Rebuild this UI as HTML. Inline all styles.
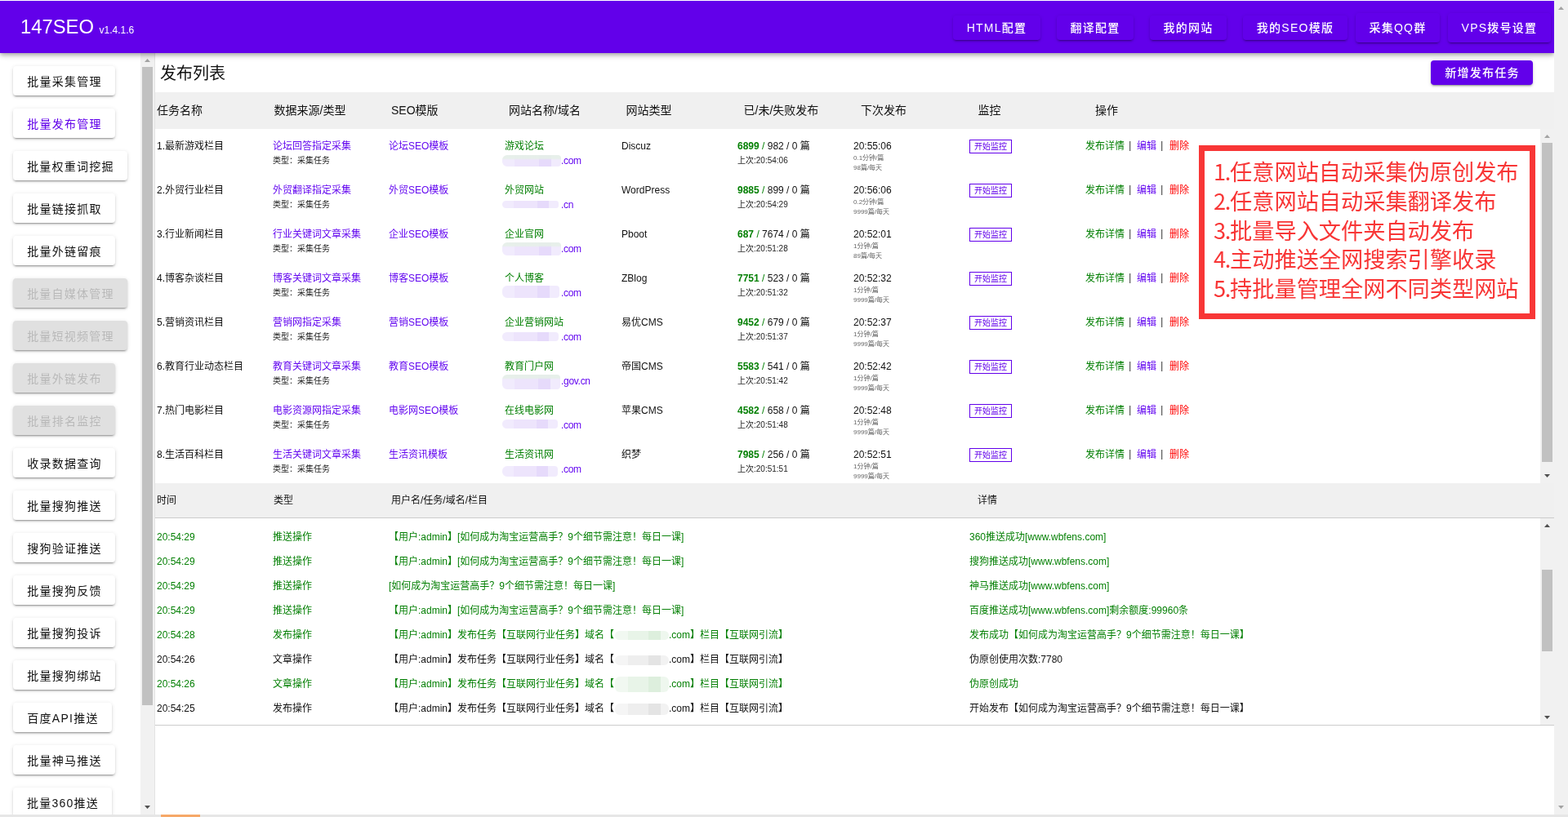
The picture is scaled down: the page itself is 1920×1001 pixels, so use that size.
<!DOCTYPE html>
<html lang="zh-CN">
<head>
<meta charset="utf-8">
<title>147SEO - 发布列表</title>
<style>
*{box-sizing:border-box;margin:0;padding:0}
html,body{width:1920px;height:1001px;overflow:hidden;background:#fff}
body{position:relative;will-change:transform;font-family:"Liberation Sans","Noto Sans CJK SC",sans-serif;color:#111;font-size:12px;line-height:16px}
/* app bar */
#bar{position:absolute;left:0;top:1px;width:1903px;height:64px;background:#6200ea;z-index:5;
 box-shadow:0 2px 4px -1px rgba(0,0,0,.2),0 4px 5px 0 rgba(0,0,0,.14),0 1px 10px 0 rgba(0,0,0,.12)}
#bar .logo{position:absolute;left:25px;top:15px;color:#fff;font-size:23.8px;line-height:34px;white-space:nowrap}
#bar .logo small{font-size:12px;margin-left:0}
.nb{position:absolute;color:#fff;font-size:14px;font-weight:500;letter-spacing:1.25px;line-height:31px;height:30px;top:18px;text-align:center;border-radius:4px;white-space:nowrap;
 box-shadow:0 3px 1px -2px rgba(0,0,0,.2),0 2px 2px 0 rgba(0,0,0,.14),0 1px 5px 0 rgba(0,0,0,.12)}
.nb.big{height:36px;top:15px;line-height:37px}
/* sidebar */
#side{position:absolute;left:0;top:65px;width:172px;height:933px;overflow:hidden;background:#fff}
.sb{position:absolute;left:16px;height:36px;line-height:38.5px;width:125px;border-radius:4px;background:#fff;color:#111;font-size:14px;letter-spacing:1.25px;text-align:center;white-space:nowrap;text-indent:1px;
 box-shadow:0 3px 1px -2px rgba(0,0,0,.2),0 2px 2px 0 rgba(0,0,0,.14),0 1px 5px 0 rgba(0,0,0,.12)}
.sb.w7{width:140px}
.sb.w5{width:121px}
.sb.act{color:#6200ea}
.sb.dis{background:#e0e0e0;color:#b9b9b9}
/* scrollbars */
.sc{position:absolute;width:17px;background:#f1f1f1}
.sc i{position:absolute;left:2px;width:13px;background:#c1c1c1}
.sc b{position:absolute;left:5px;width:7px;height:4px;background:#505050}
.sc b.u{clip-path:polygon(50% 0,100% 100%,0 100%)}
.sc b.d{clip-path:polygon(0 0,100% 0,50% 100%)}
.sc b.g{background:#a3a3a3}
/* main */
#title{position:absolute;left:196px;top:76px;font-size:20px;line-height:28px;color:#111}
#add{position:absolute;left:1752px;top:74px;width:125px;height:30px;line-height:31px;font-weight:500;border-radius:4px;background:#6200ea;color:#fff;font-size:14px;letter-spacing:1.25px;text-align:center;text-indent:1px;
 box-shadow:0 3px 1px -2px rgba(0,0,0,.2),0 2px 2px 0 rgba(0,0,0,.14),0 1px 5px 0 rgba(0,0,0,.12)}
.hd{position:absolute;left:190px;width:1713px;background:#f0f0f0}
.hd span{position:absolute;white-space:nowrap;color:#111}
#h1{top:113px;height:45px}
#h1 span{font-size:14px;line-height:20px;top:12px}
#h2{top:592px;height:43px;border-bottom:1px solid #ccc}
#h2 span{font-size:12px;line-height:16px;top:13px}
.row{position:absolute;left:190px;width:1696px;height:54px}
.row span,.row a{position:absolute;white-space:nowrap;font-size:12px;line-height:16px;top:13px}
.row .s{font-size:10px;line-height:14px;top:32px;color:#222}
.row .x{font-size:8px;line-height:12px;color:#666}
.row .bar{font-size:13px;top:12px;color:#444}
.g{color:#058005}
.p{color:#6408f0}
.r{color:#f00}
.row .mon{left:997px;top:13px;width:52px;height:17px;border:1px solid #6200ea;color:#6200ea;font-size:10px;line-height:15px;text-align:center}
.row .blur{left:425px;width:72px;border-radius:6px 4px 4px 6px;background:linear-gradient(90deg,#f1ebfd 0 21%,#ede4fc 21% 62%,#e6dafb 62% 83%,#f1ebfd 83%);filter:blur(.6px)}
.row .blur.gr{background:linear-gradient(180deg,rgba(230,240,232,.9) 0 4px,rgba(230,240,232,0) 6px),linear-gradient(90deg,#f1ebfd 0 21%,#ede4fc 21% 62%,#e6dafb 62% 83%,#f1ebfd 83%)}
.lg{position:absolute;left:190px;width:1696px;height:30px}
.lg span{position:absolute;white-space:nowrap;font-size:12px;line-height:16px;top:7px}
.lg .bl{width:66px;left:563px;border-radius:6px;filter:blur(.7px)}
.lg.g .bl{background:linear-gradient(90deg,#f1f8f1 0 25%,#e8f4e8 25% 62%,#ddefdd 62% 85%,#eef7ee 85%)}
.lg.k .bl{background:linear-gradient(90deg,#f5f5f5 0 25%,#eeeeee 25% 62%,#e4e4e4 62% 85%,#f2f2f2 85%)}
.lg.k span{color:#111}
.lg.g span{color:#058005}
#note{position:absolute;left:1468px;top:178px;width:412px;height:213px;border:7px solid #f83636;background:#fff;color:#f83636;font-family:"Noto Sans CJK SC","Liberation Sans",sans-serif;font-size:27.2px;line-height:35.75px;padding:7px 0 0 11px;white-space:nowrap;z-index:3}
#note i{font-style:normal;letter-spacing:-1.3px}
#top{position:absolute;left:0;top:0;width:1903px;height:1px;background:#fff;z-index:7}
#foot{position:absolute;left:0;top:998px;width:1920px;height:3px;background:#e6e6e6}
#foot i{position:absolute;left:197px;top:0;width:48px;height:3px;background:#f6a868}
#vl{position:absolute;left:189px;top:65px;width:1px;height:933px;background:#e3e3e3}
#l1{position:absolute;left:190px;top:888px;width:1713px;height:1px;background:#ccc}
</style>
</head>
<body>

<div id="top"></div>
<div id="bar">
<div class="logo">147SEO <small>v1.4.1.6</small></div>
<div class="nb" style="left:1167px;width:107px">HTML配置</div>
<div class="nb" style="left:1294px;width:94px">翻译配置</div>
<div class="nb" style="left:1408px;width:94px">我的网站</div>
<div class="nb" style="left:1522px;width:128px">我的SEO模版</div>
<div class="nb big" style="left:1660px;width:103px">采集QQ群</div>
<div class="nb big" style="left:1773px;width:126px">VPS拨号设置</div>
</div>
<div id="side">
<div class="sb" style="top:16px">批量采集管理</div>
<div class="sb act" style="top:68px">批量发布管理</div>
<div class="sb w7" style="top:120px">批量权重词挖掘</div>
<div class="sb" style="top:172px">批量链接抓取</div>
<div class="sb" style="top:224px">批量外链留痕</div>
<div class="sb w7 dis" style="top:276px">批量自媒体管理</div>
<div class="sb w7 dis" style="top:328px">批量短视频管理</div>
<div class="sb dis" style="top:380px">批量外链发布</div>
<div class="sb dis" style="top:432px">批量排名监控</div>
<div class="sb" style="top:484px">收录数据查询</div>
<div class="sb" style="top:536px">批量搜狗推送</div>
<div class="sb" style="top:588px">搜狗验证推送</div>
<div class="sb" style="top:640px">批量搜狗反馈</div>
<div class="sb" style="top:692px">批量搜狗投诉</div>
<div class="sb" style="top:744px">批量搜狗绑站</div>
<div class="sb w5" style="top:796px">百度API推送</div>
<div class="sb" style="top:848px">批量神马推送</div>
<div class="sb w5" style="top:900px">批量360推送</div>
</div>
<div class="sc" style="left:172px;top:65px;height:933px;border-right:0"><b class="u g" style="top:7px"></b><i style="top:17px;height:782px"></i><b class="d" style="top:922px"></b></div>
<div id="title">发布列表</div>
<div id="add">新增发布任务</div>
<div class="hd" id="h1">
<span style="left:2px">任务名称</span>
<span style="left:145.5px">数据来源/类型</span>
<span style="left:289px">SEO模版</span>
<span style="left:433px">网站名称/域名</span>
<span style="left:576.5px">网站类型</span>
<span style="left:720.5px">已/未/失败发布</span>
<span style="left:864px">下次发布</span>
<span style="left:1007.5px">监控</span>
<span style="left:1151px">操作</span>
</div>
<div class="row" style="top:158px">
<span style="left:2px">1.最新游戏栏目</span>
<a class="p" style="left:144px">论坛回答指定采集</a><span class="s" style="left:144px">类型：采集任务</span>
<a class="p" style="left:286px">论坛SEO模板</a>
<a class="g" style="left:428px">游戏论坛</a>
<span class="blur gr" style="top:32px;height:14px;width:72px"></span><a class="p" style="left:497px;top:31px;letter-spacing:-.3px">.com</a>
<span style="left:571px">Discuz</span>
<span style="left:713px"><b class="g">6899</b> <span class="g" style="position:static">/</span> 982 / 0 篇</span>
<span class="s" style="left:713px">上次:20:54:06</span>
<span style="left:855px">20:55:06</span><span class="x" style="left:855px;top:30px">0.1分钟/篇</span><span class="x" style="left:855px;top:42px">98篇/每天</span>
<span class="mon">开始监控</span>
<a class="g" style="left:1139px">发布详情</a><span class="bar" style="left:1192px">|</span><a class="p" style="left:1202px">编辑</a><span class="bar" style="left:1231px">|</span><a class="r" style="left:1242px">删除</a>
</div>
<div class="row" style="top:212px">
<span style="left:2px">2.外贸行业栏目</span>
<a class="p" style="left:144px">外贸翻译指定采集</a><span class="s" style="left:144px">类型：采集任务</span>
<a class="p" style="left:286px">外贸SEO模板</a>
<a class="g" style="left:428px">外贸网站</a>
<span class="blur" style="top:34px;height:9px;width:69px"></span><a class="p" style="left:497px;top:31px;letter-spacing:-.3px">.cn</a>
<span style="left:571px">WordPress</span>
<span style="left:713px"><b class="g">9885</b> <span class="g" style="position:static">/</span> 899 / 0 篇</span>
<span class="s" style="left:713px">上次:20:54:29</span>
<span style="left:855px">20:56:06</span><span class="x" style="left:855px;top:30px">0.2分钟/篇</span><span class="x" style="left:855px;top:42px">9999篇/每天</span>
<span class="mon">开始监控</span>
<a class="g" style="left:1139px">发布详情</a><span class="bar" style="left:1192px">|</span><a class="p" style="left:1202px">编辑</a><span class="bar" style="left:1231px">|</span><a class="r" style="left:1242px">删除</a>
</div>
<div class="row" style="top:266px">
<span style="left:2px">3.行业新闻栏目</span>
<a class="p" style="left:144px">行业关键词文章采集</a><span class="s" style="left:144px">类型：采集任务</span>
<a class="p" style="left:286px">企业SEO模板</a>
<a class="g" style="left:428px">企业官网</a>
<span class="blur gr" style="top:31px;height:16px;width:72px"></span><a class="p" style="left:497px;top:31px;letter-spacing:-.3px">.com</a>
<span style="left:571px">Pboot</span>
<span style="left:713px"><b class="g">687</b> <span class="g" style="position:static">/</span> 7674 / 0 篇</span>
<span class="s" style="left:713px">上次:20:51:28</span>
<span style="left:855px">20:52:01</span><span class="x" style="left:855px;top:30px">1分钟/篇</span><span class="x" style="left:855px;top:42px">89篇/每天</span>
<span class="mon">开始监控</span>
<a class="g" style="left:1139px">发布详情</a><span class="bar" style="left:1192px">|</span><a class="p" style="left:1202px">编辑</a><span class="bar" style="left:1231px">|</span><a class="r" style="left:1242px">删除</a>
</div>
<div class="row" style="top:320px">
<span style="left:2px">4.博客杂谈栏目</span>
<a class="p" style="left:144px">博客关键词文章采集</a><span class="s" style="left:144px">类型：采集任务</span>
<a class="p" style="left:286px">博客SEO模板</a>
<a class="g" style="left:428px">个人博客</a>
<span class="blur" style="top:30px;height:15px;width:70px"></span><a class="p" style="left:497px;top:31px;letter-spacing:-.3px">.com</a>
<span style="left:571px">ZBlog</span>
<span style="left:713px"><b class="g">7751</b> <span class="g" style="position:static">/</span> 523 / 0 篇</span>
<span class="s" style="left:713px">上次:20:51:32</span>
<span style="left:855px">20:52:32</span><span class="x" style="left:855px;top:30px">1分钟/篇</span><span class="x" style="left:855px;top:42px">9999篇/每天</span>
<span class="mon">开始监控</span>
<a class="g" style="left:1139px">发布详情</a><span class="bar" style="left:1192px">|</span><a class="p" style="left:1202px">编辑</a><span class="bar" style="left:1231px">|</span><a class="r" style="left:1242px">删除</a>
</div>
<div class="row" style="top:374px">
<span style="left:2px">5.营销资讯栏目</span>
<a class="p" style="left:144px">营销网指定采集</a><span class="s" style="left:144px">类型：采集任务</span>
<a class="p" style="left:286px">营销SEO模板</a>
<a class="g" style="left:428px">企业营销网站</a>
<span class="blur" style="top:33px;height:11px;width:69px"></span><a class="p" style="left:497px;top:31px;letter-spacing:-.3px">.com</a>
<span style="left:571px">易优CMS</span>
<span style="left:713px"><b class="g">9452</b> <span class="g" style="position:static">/</span> 679 / 0 篇</span>
<span class="s" style="left:713px">上次:20:51:37</span>
<span style="left:855px">20:52:37</span><span class="x" style="left:855px;top:30px">1分钟/篇</span><span class="x" style="left:855px;top:42px">9999篇/每天</span>
<span class="mon">开始监控</span>
<a class="g" style="left:1139px">发布详情</a><span class="bar" style="left:1192px">|</span><a class="p" style="left:1202px">编辑</a><span class="bar" style="left:1231px">|</span><a class="r" style="left:1242px">删除</a>
</div>
<div class="row" style="top:428px">
<span style="left:2px">6.教育行业动态栏目</span>
<a class="p" style="left:144px">教育关键词文章采集</a><span class="s" style="left:144px">类型：采集任务</span>
<a class="p" style="left:286px">教育SEO模板</a>
<a class="g" style="left:428px">教育门户网</a>
<span class="blur gr" style="top:31px;height:18px;width:71px"></span><a class="p" style="left:497px;top:31px;letter-spacing:-.3px">.gov.cn</a>
<span style="left:571px">帝国CMS</span>
<span style="left:713px"><b class="g">5583</b> <span class="g" style="position:static">/</span> 541 / 0 篇</span>
<span class="s" style="left:713px">上次:20:51:42</span>
<span style="left:855px">20:52:42</span><span class="x" style="left:855px;top:30px">1分钟/篇</span><span class="x" style="left:855px;top:42px">9999篇/每天</span>
<span class="mon">开始监控</span>
<a class="g" style="left:1139px">发布详情</a><span class="bar" style="left:1192px">|</span><a class="p" style="left:1202px">编辑</a><span class="bar" style="left:1231px">|</span><a class="r" style="left:1242px">删除</a>
</div>
<div class="row" style="top:482px">
<span style="left:2px">7.热门电影栏目</span>
<a class="p" style="left:144px">电影资源网指定采集</a><span class="s" style="left:144px">类型：采集任务</span>
<a class="p" style="left:286px">电影网SEO模板</a>
<a class="g" style="left:428px">在线电影网</a>
<span class="blur" style="top:32px;height:11px;width:68px"></span><a class="p" style="left:497px;top:31px;letter-spacing:-.3px">.com</a>
<span style="left:571px">苹果CMS</span>
<span style="left:713px"><b class="g">4582</b> <span class="g" style="position:static">/</span> 658 / 0 篇</span>
<span class="s" style="left:713px">上次:20:51:48</span>
<span style="left:855px">20:52:48</span><span class="x" style="left:855px;top:30px">1分钟/篇</span><span class="x" style="left:855px;top:42px">9999篇/每天</span>
<span class="mon">开始监控</span>
<a class="g" style="left:1139px">发布详情</a><span class="bar" style="left:1192px">|</span><a class="p" style="left:1202px">编辑</a><span class="bar" style="left:1231px">|</span><a class="r" style="left:1242px">删除</a>
</div>
<div class="row" style="top:536px">
<span style="left:2px">8.生活百科栏目</span>
<a class="p" style="left:144px">生活关键词文章采集</a><span class="s" style="left:144px">类型：采集任务</span>
<a class="p" style="left:286px">生活资讯模板</a>
<a class="g" style="left:428px">生活资讯网</a>
<span class="blur" style="top:35px;height:13px;width:68px"></span><a class="p" style="left:497px;top:31px;letter-spacing:-.3px">.com</a>
<span style="left:571px">织梦</span>
<span style="left:713px"><b class="g">7985</b> <span class="g" style="position:static">/</span> 256 / 0 篇</span>
<span class="s" style="left:713px">上次:20:51:51</span>
<span style="left:855px">20:52:51</span><span class="x" style="left:855px;top:30px">1分钟/篇</span><span class="x" style="left:855px;top:42px">9999篇/每天</span>
<span class="mon">开始监控</span>
<a class="g" style="left:1139px">发布详情</a><span class="bar" style="left:1192px">|</span><a class="p" style="left:1202px">编辑</a><span class="bar" style="left:1231px">|</span><a class="r" style="left:1242px">删除</a>
</div>
<div class="sc" style="left:1886px;top:158px;height:434px"><b class="u g" style="top:7px"></b><i style="top:17px;height:391px"></i><b class="d" style="top:423px"></b></div>
<div class="hd" id="h2"><span style="left:2px">时间</span><span style="left:145px">类型</span><span style="left:289px">用户名/任务/域名/栏目</span><span style="left:1007px">详情</span></div>
<div class="lg g" style="top:643px"><span style="left:2px">20:54:29</span><span style="left:144px">推送操作</span><span style="left:286px">【用户:admin】[如何成为淘宝运营高手？9个细节需注意！每日一课]</span><span style="left:997px">360推送成功[www.wbfens.com]</span></div>
<div class="lg g" style="top:673px"><span style="left:2px">20:54:29</span><span style="left:144px">推送操作</span><span style="left:286px">【用户:admin】[如何成为淘宝运营高手？9个细节需注意！每日一课]</span><span style="left:997px">搜狗推送成功[www.wbfens.com]</span></div>
<div class="lg g" style="top:703px"><span style="left:2px">20:54:29</span><span style="left:144px">推送操作</span><span style="left:286px">[如何成为淘宝运营高手？9个细节需注意！每日一课]</span><span style="left:997px">神马推送成功[www.wbfens.com]</span></div>
<div class="lg g" style="top:733px"><span style="left:2px">20:54:29</span><span style="left:144px">推送操作</span><span style="left:286px">【用户:admin】[如何成为淘宝运营高手？9个细节需注意！每日一课]</span><span style="left:997px">百度推送成功[www.wbfens.com]剩余额度:99960条</span></div>
<div class="lg g" style="top:763px"><span style="left:2px">20:54:28</span><span style="left:144px">发布操作</span><span style="left:286px">【用户:admin】发布任务【互联网行业任务】域名【</span><span class="bl" style="top:10px;height:11px"></span><span style="left:629px">.com】栏目【互联网引流】</span><span style="left:997px">发布成功【如何成为淘宝运营高手？9个细节需注意！每日一课】</span></div>
<div class="lg k" style="top:793px"><span style="left:2px">20:54:26</span><span style="left:144px">文章操作</span><span style="left:286px">【用户:admin】发布任务【互联网行业任务】域名【</span><span class="bl" style="top:10px;height:12px"></span><span style="left:629px">.com】栏目【互联网引流】</span><span style="left:997px">伪原创使用次数:7780</span></div>
<div class="lg g" style="top:823px"><span style="left:2px">20:54:26</span><span style="left:144px">文章操作</span><span style="left:286px">【用户:admin】发布任务【互联网行业任务】域名【</span><span class="bl" style="top:6px;height:19px"></span><span style="left:629px">.com】栏目【互联网引流】</span><span style="left:997px">伪原创成功</span></div>
<div class="lg k" style="top:853px"><span style="left:2px">20:54:25</span><span style="left:144px">发布操作</span><span style="left:286px">【用户:admin】发布任务【互联网行业任务】域名【</span><span class="bl" style="top:9px;height:14px"></span><span style="left:629px">.com】栏目【互联网引流】</span><span style="left:997px">开始发布【如何成为淘宝运营高手？9个细节需注意！每日一课】</span></div>
<div class="sc" style="left:1886px;top:635px;height:253px"><b class="u" style="top:7px"></b><i style="top:63px;height:100px"></i><b class="d" style="top:242px"></b></div>
<div id="l1"></div>
<div id="vl"></div>
<div id="note"><i>1.</i>任意网站自动采集伪原创发布<br><i>2.</i>任意网站自动采集翻译发布<br><i>3.</i>批量导入文件夹自动发布<br><i>4.</i>主动推送全网搜索引擎收录<br><i>5.</i>持批量管理全网不同类型网站</div>
<div class="sc" style="left:1903px;top:0;height:998px;z-index:6"><b class="u g" style="top:8px"></b><b class="d g" style="top:987px"></b></div>
<div id="foot"><i></i></div>
</body>
</html>
